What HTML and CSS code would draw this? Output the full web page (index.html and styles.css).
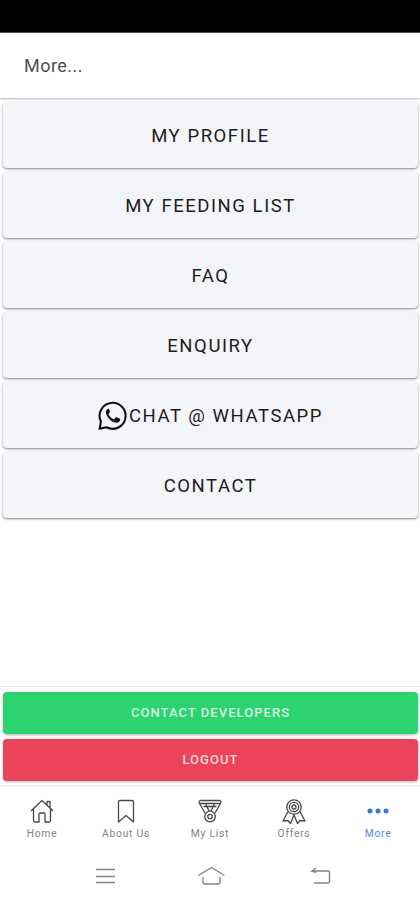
FILE: index.html
```html
<!DOCTYPE html>
<html lang="en">
<head>
  <meta charset="UTF-8">
  <meta name="viewport" content="width=device-width, initial-scale=1.0">
  <title>More</title>
  <link rel="stylesheet" href="styles.css">
</head>

<body>
  <div class="status-bar"></div>

  <header class="toolbar">
    <h1>More...</h1>
  </header>

  <main class="menu">
    <button class="menu-button">My Profile</button>
    <button class="menu-button">My Feeding List</button>
    <button class="menu-button">FAQ</button>
    <button class="menu-button">Enquiry</button>
    <button class="menu-button">
      <svg class="whatsapp" viewBox="0 0 30 30" fill="none" stroke="#111" stroke-width="2.1">
        <path d="M1.700 27.600 2.900 20.500A13 13 0 1 1 8.500 26.300Z" stroke-linejoin="miter"/>
        <path d="M10.200 7.700c-1.500.6-2.500 2-2.300 3.800.5 4.700 5.300 9.500 10 10.200 2 .3 4-.9 4.300-2.900.1-.7-.1-1-.7-1.300l-2.500-1.200c-.6-.3-1-.2-1.400.3l-1.100 1.300c-.3.4-.7.400-1.200.2-2-.9-3.700-2.500-4.700-4.500-.2-.5-.1-.7.300-1.100l.8-1c.3-.4.300-.7.100-1.200l-1-2.300c-.2-.4-.4-.5-.6-.3z" fill="#111" stroke="none"/>
      </svg>Chat @ WhatsApp
    </button>
    <button class="menu-button">Contact</button>
  </main>

  <footer class="actions">
    <button class="action-button success">Contact Developers</button>
    <button class="action-button danger">Logout</button>
  </footer>

  <nav class="tabs">
    <a class="tab">
      <svg viewBox="0 0 26 26">
        <path d="M2 13 13 2.500 24 13M18 7V3.500h3V10M4.500 11v11.500q0 1.500 1.500 1.500h4v-8q0-1 1-1h4q1 0 1 1v8h4q1.500 0 1.500-1.500V11"/>
      </svg>
      <span>Home</span>
    </a>
    <a class="tab">
      <svg viewBox="0 0 26 26">
        <path d="M5.500 4q0-1.500 1.500-1.500h12q1.500 0 1.500 1.500v20L13 17.500 5.500 24z"/>
      </svg>
      <span>About Us</span>
    </a>
    <a class="tab">
      <svg viewBox="0 0 26 26">
        <path d="M3 2.500h20q1.500 1 .8 2.500L18 15M8 15 2.200 5Q1.500 3.500 3 2.500M2.500 5.500h21M6.500 8.500h13M8.500 5.500 12 13M17.500 5.500 14 13"/>
        <circle cx="13" cy="18.500" r="5.300"/>
        <circle cx="13" cy="18.500" r="2.200"/>
      </svg>
      <span>My List</span>
    </a>
    <a class="tab">
      <svg viewBox="0 0 26 26">
        <circle cx="13" cy="9" r="7.200"/>
        <circle cx="13" cy="9" r="4.700"/>
        <circle cx="13" cy="9" r="2"/>
        <path d="M7 13.500 2 23l5-.5L9.500 25.500 13 17l3.500 8.500 2.500-3 5 .5-5-9.500"/>
      </svg>
      <span>Offers</span>
    </a>
    <a class="tab active">
      <svg viewBox="0 0 26 26">
        <circle class="dot" cx="5" cy="13" r="2.500"/>
        <circle class="dot" cx="13" cy="13" r="2.500"/>
        <circle class="dot" cx="21" cy="13" r="2.500"/>
      </svg>
      <span>More</span>
    </a>
  </nav>

  <!-- Android navigation keys -->
  <div class="system-nav">
    <svg viewBox="0 0 30 24"><path d="M6 5.500h19M6 12.500h19M6 18.500h19"/></svg>
    <svg viewBox="0 0 30 24"><path d="M1.500 11.500 14.500 3.500l13 8M6 13v5q0 2 2 2h13q2 0 2-2v-5"/></svg>
    <svg viewBox="0 0 30 24"><path d="M10 4 6 7h16q1.500 0 1.500 1.500v9q0 1.500-1.500 1.500H8M6 7l4 1.500"/></svg>
  </div>
</body>
</html>
```
FILE: styles.css
```css
* {
  box-sizing: border-box;
}

body {
  display: flex;
  flex-direction: column;
  height: 900px;
  margin: 0;
  background: #fff;
  font-family: Roboto, sans-serif;
}

.status-bar {
  height: 33px;
  background: #000;
  border-bottom: 1px solid #555;
}

.toolbar {
  display: flex;
  align-items: center;
  height: 65px;
  padding: 0 24px;
  box-shadow: 0 1px 2px rgba(0, 0, 0, 0.3);
  z-index: 1;
}

h1 {
  margin: 0;
  font-size: 18px;
  font-weight: 400;
  letter-spacing: 0.45px;
  color: #505050;
}

button {
  display: flex;
  align-items: center;
  justify-content: center;
  border: none;
  border-radius: 4px;
  padding: 0;
  font-family: inherit;
  text-transform: uppercase;
}

.menu {
  flex: 1;
  display: flex;
  flex-direction: column;
  gap: 4px;
  padding: 4px 2px 4px 3px;
}

.menu-button {
  height: 66px;
  padding-top: 1px;
  background: #f4f5f9;
  color: #1c1c1c;
  font-size: 18.5px;
  letter-spacing: 1.55px;
  box-shadow: 0 1px 2px rgba(0, 0, 0, 0.42), 0 1px 4px rgba(0, 0, 0, 0.1);
}

.whatsapp {
  width: 30px;
  height: 30px;
  margin-right: 1px;
}

.actions {
  display: flex;
  flex-direction: column;
  gap: 5px;
  height: 99px;
  padding: 5px 2px 0 3px;
  border-top: 1px solid #ececec;
}

.action-button {
  height: 42px;
  padding-bottom: 2px;
  color: #fff;
  font-size: 13px;
  font-weight: 500;
  letter-spacing: 1.05px;
  box-shadow: 0 1px 3px rgba(0, 0, 0, 0.3);
}

.success {
  background: #2dd36f;
  color: #d5f6e2;
}

.danger {
  background: #eb445a;
  color: #fbdade;
}

.tabs {
  display: grid;
  grid-template-columns: repeat(5, 1fr);
  height: 60px;
  border-top: 2px solid #f1f1f1;
}

.tab {
  display: flex;
  flex-direction: column;
  align-items: center;
  padding-top: 11px;
  color: #858585;
  font-size: 10.3px;
  line-height: 12px;
  letter-spacing: 0.75px;
}

.tab svg {
  width: 26px;
  height: 26px;
  margin-bottom: 4px;
  fill: none;
  stroke: #484848;
  stroke-width: 1.3;
  stroke-linejoin: round;
}

.active {
  color: #4a8be0;
}

.tab .dot {
  fill: #3478d4;
  stroke: none;
}

.system-nav {
  display: flex;
  justify-content: center;
  gap: 77px;
  height: 55px;
  padding: 19px 0 0 5px;
}

.system-nav svg {
  width: 30px;
  height: 24px;
  fill: none;
  stroke: #858585;
  stroke-width: 1.4;
}

.system-nav svg:last-child {
  margin-left: 2px;
}
```
